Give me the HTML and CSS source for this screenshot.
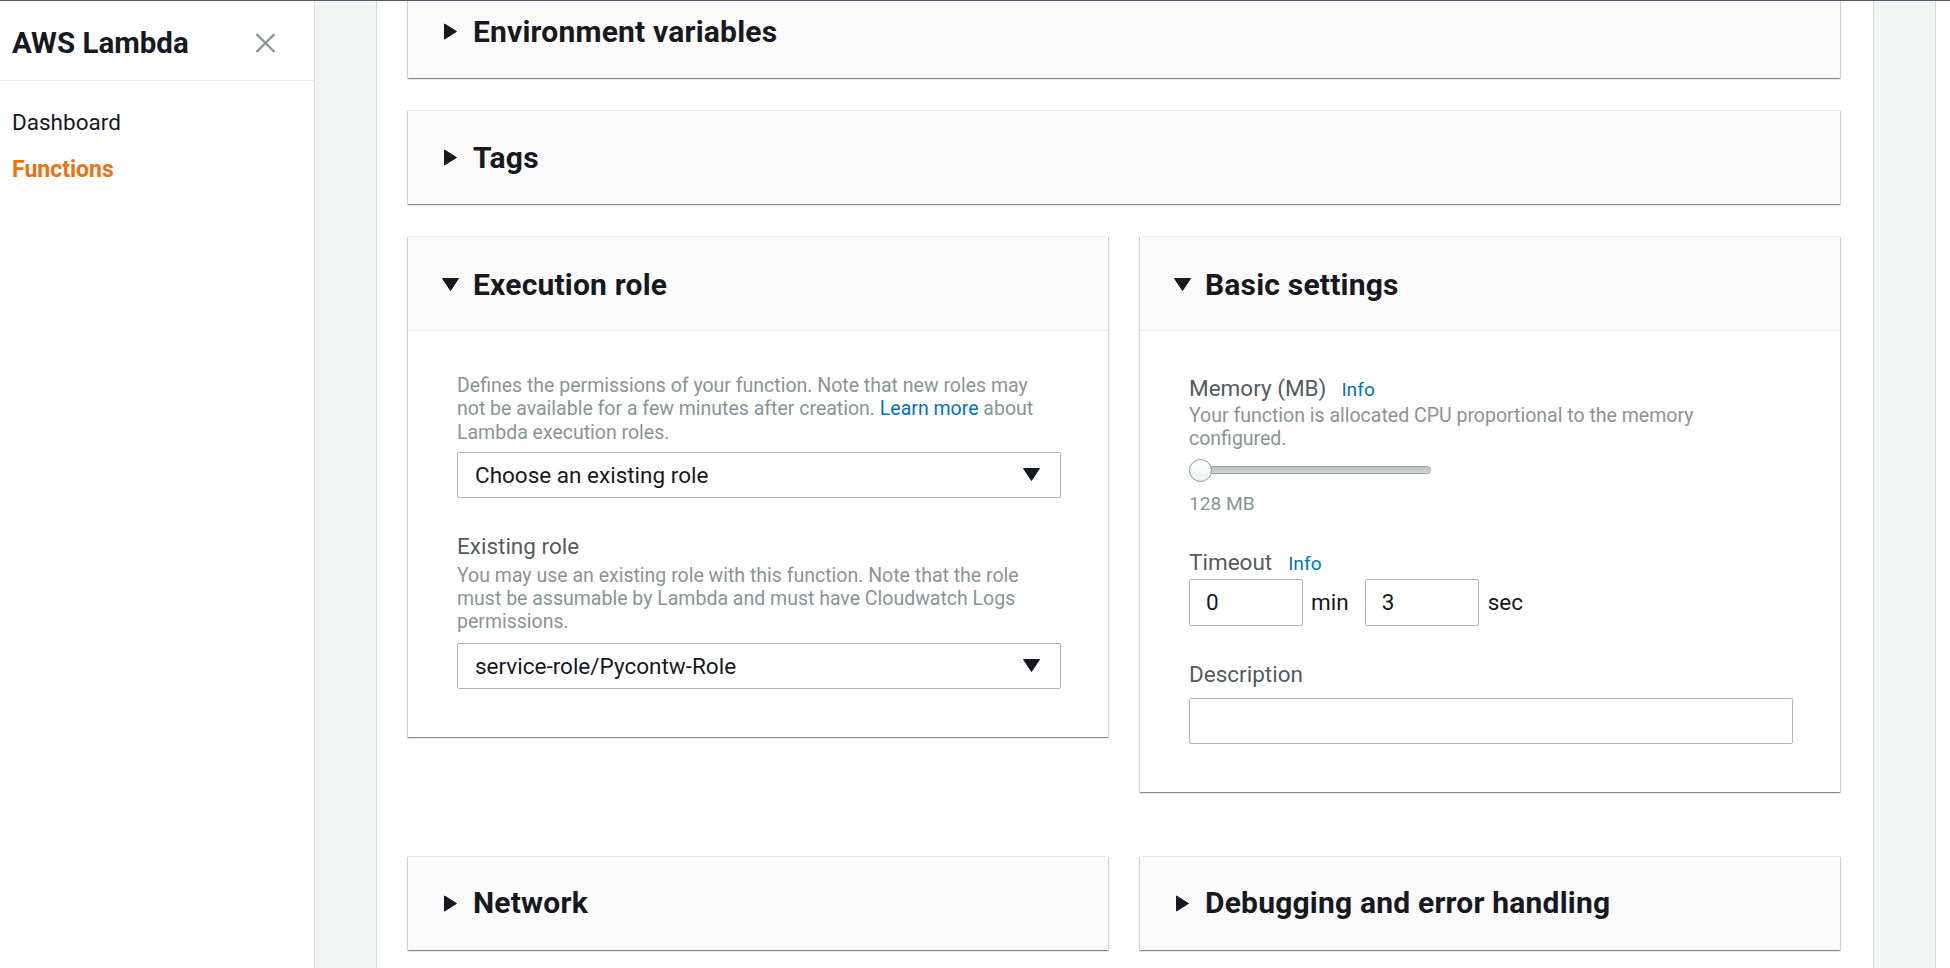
FILE: index.html
```html
<!DOCTYPE html>
<html lang="en">
<head>
<meta charset="utf-8">
<title>AWS Lambda</title>
<link rel="stylesheet" href="styles.css">
</head>
<body>
<div class="topline"></div>
<div class="app">
  <aside class="sidebar">
    <div class="side-head">
      <span class="side-title">AWS Lambda</span>
      <svg class="close" width="21" height="20" viewBox="0 0 21 20"><path d="M1.5 1 L19.5 19 M19.5 1 L1.5 19" stroke="#879596" stroke-width="2.4" fill="none"/></svg>
    </div>
    <nav class="side-nav">
      <a class="nav-item">Dashboard</a>
      <a class="nav-item active">Functions</a>
    </nav>
  </aside>
  <div class="gutter"></div>
  <main class="main">
    <div class="content">
      <section class="panel">
        <div class="panel-head">
          <svg class="caret" viewBox="0 0 17 17"><path d="M2.5 1 L14.5 8.5 L2.5 16 Z" fill="#16191f" stroke="#16191f" stroke-width="1" stroke-linejoin="round"/></svg>
          <h2 class="panel-title">Environment variables</h2>
        </div>
      </section>
      <section class="panel">
        <div class="panel-head">
          <svg class="caret" viewBox="0 0 17 17"><path d="M2.5 1 L14.5 8.5 L2.5 16 Z" fill="#16191f" stroke="#16191f" stroke-width="1" stroke-linejoin="round"/></svg>
          <h2 class="panel-title">Tags</h2>
        </div>
      </section>
      <div class="row">
        <section class="panel open">
          <div class="panel-head">
            <svg class="caret" viewBox="0 0 17 17"><path d="M0.5 2.5 L16.5 2.5 L8.5 14.5 Z" fill="#16191f" stroke="#16191f" stroke-width="1" stroke-linejoin="round"/></svg>
            <h2 class="panel-title">Execution role</h2>
          </div>
          <div class="panel-body">
            <p class="desc">Defines the permissions of your function. Note that new roles may<br>not be available for a few minutes after creation. <a class="link">Learn more</a> about<br>Lambda execution roles.</p>
            <div class="select">
              <span>Choose an existing role</span>
              <svg class="select-caret" width="17" height="13" viewBox="0 0 17 13"><path d="M0.5 0.5 L16.5 0.5 L8.5 12.5 Z" fill="#16191f" stroke="#16191f" stroke-width="1" stroke-linejoin="round"/></svg>
            </div>
            <div class="field">
              <div class="label">Existing role</div>
              <p class="desc desc-tight">You may use an existing role with this function. Note that the role<br>must be assumable by Lambda and must have Cloudwatch Logs<br>permissions.</p>
              <div class="select select-2">
                <span>service-role/Pycontw-Role</span>
                <svg class="select-caret" width="17" height="13" viewBox="0 0 17 13"><path d="M0.5 0.5 L16.5 0.5 L8.5 12.5 Z" fill="#16191f" stroke="#16191f" stroke-width="1" stroke-linejoin="round"/></svg>
              </div>
            </div>
          </div>
        </section>
        <section class="panel open">
          <div class="panel-head">
            <svg class="caret" viewBox="0 0 17 17"><path d="M0.5 2.5 L16.5 2.5 L8.5 14.5 Z" fill="#16191f" stroke="#16191f" stroke-width="1" stroke-linejoin="round"/></svg>
            <h2 class="panel-title">Basic settings</h2>
          </div>
          <div class="panel-body panel-body-basic">
            <div class="label">Memory (MB)<a class="info">Info</a></div>
            <p class="desc desc-mem">Your function is allocated CPU proportional to the memory<br>configured.</p>
            <div class="slider">
              <div class="slider-track"></div>
              <div class="slider-thumb"></div>
            </div>
            <div class="mem-value">128 MB</div>
            <div class="field field-timeout">
              <div class="label">Timeout<a class="info info-t">Info</a></div>
              <div class="timeout">
                <div class="tbox">0</div>
                <span class="unit">min</span>
                <div class="tbox">3</div>
                <span class="unit unit-sec">sec</span>
              </div>
            </div>
            <div class="field">
              <div class="label">Description</div>
              <div class="textbox"></div>
            </div>
          </div>
        </section>
      </div>
      <div class="row row-bottom">
        <section class="panel">
          <div class="panel-head">
            <svg class="caret" viewBox="0 0 17 17"><path d="M2.5 1 L14.5 8.5 L2.5 16 Z" fill="#16191f" stroke="#16191f" stroke-width="1" stroke-linejoin="round"/></svg>
            <h2 class="panel-title">Network</h2>
          </div>
        </section>
        <section class="panel">
          <div class="panel-head">
            <svg class="caret" viewBox="0 0 17 17"><path d="M2.5 1 L14.5 8.5 L2.5 16 Z" fill="#16191f" stroke="#16191f" stroke-width="1" stroke-linejoin="round"/></svg>
            <h2 class="panel-title">Debugging and error handling</h2>
          </div>
        </section>
      </div>
    </div>
  </main>
  <div class="rstrip"></div>
  <div class="rpad"></div>
</div>
</body>
</html>
```
FILE: styles.css
```css
* { box-sizing: border-box; }

html, body {
  margin: 0;
  height: 100%;
}

body {
  font-family: Roboto, "Liberation Sans", sans-serif;
  color: #16191f;
  background: #fff;
  display: flex;
  flex-direction: column;
  overflow: hidden;
}

.topline {
  height: 1px;
  background: #545b64;
  flex: none;
}

.app {
  flex: 1;
  display: flex;
  min-height: 0;
}

/* Sidebar */
.sidebar {
  width: 315px;
  flex: none;
  border-right: 1px solid #d5dbdb;
  background: #fff;
}

.side-head {
  height: 80px;
  border-bottom: 1px solid #eaeded;
  display: flex;
  align-items: center;
  justify-content: space-between;
  padding: 4px 38px 0 12px;
}

.side-title {
  font-size: 29.5px;
  font-weight: 700;
  color: #16191f;
}

.close { display: block; }

.side-nav {
  padding: 17px 0 0 12px;
}

.nav-item {
  display: block;
  font-size: 22.5px;
  line-height: 28px;
  padding: 10px 0;
  color: #16191f;
}

.nav-item.active {
  color: #ec7211;
  font-weight: 700;
  font-size: 23px;
}

.gutter {
  width: 62px;
  flex: none;
  background: #f2f3f3;
  border-right: 1px solid #d5dbdb;
}

/* Main */
.main {
  flex: 1;
  min-width: 0;
  overflow: hidden;
  padding: 0 33px 0 31px;
}

.content {
  display: flex;
  flex-direction: column;
  gap: 32px;
  margin-top: -17px;
}

.rstrip {
  width: 63px;
  flex: none;
  background: #f2f3f3;
  border-left: 1px solid #d5dbdb;
  border-right: 1px solid #d5dbdb;
}

.rpad {
  width: 14px;
  flex: none;
}

.row {
  display: grid;
  grid-template-columns: 1fr 1fr;
  gap: 32px;
  align-items: start;
}

.row-bottom { margin-top: 32px; }

/* Panels */
.panel {
  background: #fff;
  border-top: 1px solid #eaeded;
  box-shadow: 0 1px 1px 0 rgba(0, 28, 36, 0.3), 1px 1px 1px 0 rgba(0, 28, 36, 0.15), -1px 1px 1px 0 rgba(0, 28, 36, 0.15);
}

.panel-head {
  height: 93px;
  background: #fafafa;
  display: flex;
  align-items: center;
  gap: 14px;
  padding-left: 34px;
}

.panel.open .panel-head {
  height: 94px;
  border-bottom: 1px solid #eaeded;
  padding-top: 2px;
}

.caret {
  width: 17px;
  height: 17px;
  flex: none;
  display: block;
}

.panel-title {
  margin: 0;
  font-size: 30px;
  font-weight: 700;
  letter-spacing: 0.2px;
  line-height: 1.2;
  color: #16191f;
}

.panel-body {
  padding: 43px 47px 48px 49px;
}

.desc {
  margin: 0;
  font-size: 19.5px;
  line-height: 23.3px;
  color: #879596;
  white-space: nowrap;
}

.desc-tight { margin-top: 4px; }
.desc-mem { margin-top: 2px; }

.link, .info { color: #0073bb; }

.select {
  margin-top: 8px;
  height: 46px;
  border: 1px solid #aab7b8;
  border-radius: 2px;
  display: flex;
  align-items: center;
  justify-content: space-between;
  padding: 0 20px 0 17px;
  font-size: 22.5px;
  color: #16191f;
}

.select-2 { margin-top: 9px; }

.select-caret { display: block; }

.field { margin-top: 34px; }
.field-timeout { margin-top: 33px; }

.label {
  font-size: 22.5px;
  line-height: 28px;
  color: #545b64;
}

.info {
  font-size: 19.2px;
  line-height: 1;
  margin-left: 15px;
}

.info-t { margin-left: 16px; }

.slider {
  position: relative;
  width: 242px;
  height: 24px;
  margin-top: 8px;
}

.slider-track {
  position: absolute;
  left: 1px;
  top: 7px;
  width: 241px;
  height: 8px;
  border-radius: 4px;
  background: linear-gradient(#b9c3c4, #cfd6d6);
  border: 1px solid #95a5a6;
}

.slider-thumb {
  position: absolute;
  left: 0;
  top: 0;
  width: 23px;
  height: 23px;
  border-radius: 50%;
  background: linear-gradient(#ffffff, #eef0f0);
  border: 1px solid #8c9a9b;
}

.mem-value {
  margin-top: 9px;
  font-size: 19.2px;
  line-height: 23.3px;
  color: #879596;
}

.timeout {
  display: flex;
  align-items: center;
  margin-top: 3px;
}

.tbox {
  width: 114px;
  height: 47px;
  border: 1px solid #aab7b8;
  border-radius: 2px;
  padding-left: 16px;
  display: flex;
  align-items: center;
  font-size: 22.5px;
  color: #16191f;
}

.unit {
  font-size: 22.5px;
  color: #16191f;
  margin: 0 16px 0 8px;
}

.unit-sec { margin-left: 9px; }

.textbox {
  margin-top: 10px;
  height: 46px;
  border: 1px solid #aab7b8;
  border-radius: 2px;
}
```
